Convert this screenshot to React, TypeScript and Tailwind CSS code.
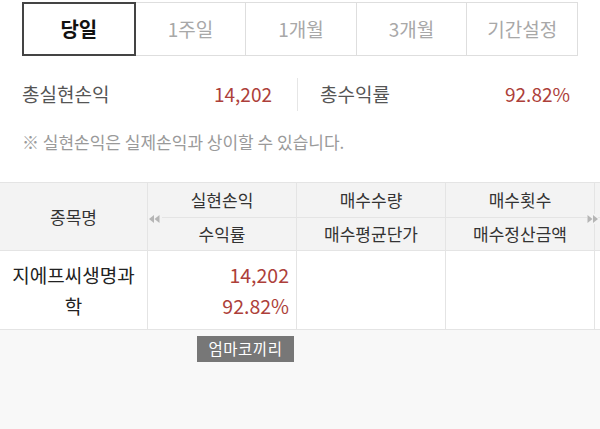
import React from "react";

const tabs = ["당일", "1주일", "1개월", "3개월", "기간설정"];

const DoubleArrow = ({ dir }: { dir: "left" | "right" }) => (
  <svg width="11" height="8" viewBox="0 0 11 8" className="block">
    {dir === "left" ? (
      <>
        <polygon points="5,0 5,8 0,4" fill="#b5b5b5" />
        <polygon points="10.5,0 10.5,8 5.5,4" fill="#b5b5b5" />
      </>
    ) : (
      <>
        <polygon points="0.5,0 0.5,8 5.5,4" fill="#b5b5b5" />
        <polygon points="6,0 6,8 11,4" fill="#b5b5b5" />
      </>
    )}
  </svg>
);

const HeadCell = ({ children }: { children?: React.ReactNode }) => (
  <div className="flex w-[149px] shrink-0 items-center justify-center border-r border-[#e4e4e4] text-[17px] text-[#333]">
    {children}
  </div>
);

const App = () => {
  const [active, setActive] = React.useState(0);

  return (
    <div
      className="flex h-[429px] w-[600px] flex-col overflow-hidden bg-white"
      style={{ fontFamily: '"Noto Sans CJK KR", "Noto Sans", sans-serif' }}
    >
      {/* period tabs */}
      <div className="flex px-[22px] pt-[2px]">
        {tabs.map((t, i) => (
          <button
            key={t}
            onClick={() => setActive(i)}
            className={
              i === active
                ? "flex h-[54px] flex-1 items-center justify-center border-2 border-[#444] text-[20px] font-bold text-[#111]"
                : "flex h-[54px] flex-1 items-center justify-center border-y border-r border-[#dedede] text-[19px] text-[#a8a8a8]"
            }
          >
            {t}
          </button>
        ))}
      </div>

      {/* summary */}
      <div className="mt-[22px] flex h-[33px] items-center px-[22px] text-[19px]">
        <div className="flex flex-1 items-center justify-between pr-[25px]">
          <span className="text-[#555]">총실현손익</span>
          <span className="text-[#ad3f3a]">14,202</span>
        </div>
        <div className="flex h-full flex-1 items-center justify-between border-l border-[#e6e6e6] pl-[22px] pr-[8px]">
          <span className="text-[#555]">총수익률</span>
          <span className="text-[#ad3f3a]">92.82%</span>
        </div>
      </div>

      <p className="mt-[21px] px-[22px] text-[17px] leading-[20px] text-[#9a9a9a]">
        ※ 실현손익은 실제손익과 상이할 수 있습니다.
      </p>

      {/* table */}
      <div className="mt-[30px] flex flex-1 flex-col bg-[#f8f8f8]">
        <div className="flex h-[69px] border-y border-[#e4e4e4] bg-[#f3f3f3]">
          <div className="flex w-[148px] shrink-0 items-center justify-center border-r border-[#e4e4e4] text-[17px] text-[#333]">
            종목명
          </div>
          <div className="relative flex flex-1 flex-col">
            <div className="flex h-[35px] border-b border-[#e4e4e4]">
              <HeadCell>실현손익</HeadCell>
              <HeadCell>매수수량</HeadCell>
              <HeadCell>매수횟수</HeadCell>
            </div>
            <div className="flex flex-1">
              <HeadCell>수익률</HeadCell>
              <HeadCell>매수평균단가</HeadCell>
              <HeadCell>매수정산금액</HeadCell>
            </div>
            <div className="absolute left-0 top-[31px] bg-[#f3f3f3] py-[1px] pl-[1px] pr-[2px]">
              <DoubleArrow dir="left" />
            </div>
            <div className="absolute right-[2px] top-[31px] bg-[#f3f3f3] py-[1px]">
              <DoubleArrow dir="right" />
            </div>
          </div>
        </div>

        <div className="flex h-[79px] border-b border-[#e4e4e4] bg-white">
          <div className="flex w-[148px] shrink-0 items-center justify-center border-r border-[#e4e4e4] px-[6px] text-center text-[19px] leading-[31px] text-[#222]">
            지에프씨생명과 학
          </div>
          <div className="flex w-[149px] shrink-0 flex-col items-end justify-center border-r border-[#e4e4e4] pr-[7px] text-[19.5px] leading-[31px] text-[#ad3f3a]">
            <span>14,202</span>
            <span>92.82%</span>
          </div>
          <div className="w-[149px] shrink-0 border-r border-[#e4e4e4]" />
          <div className="w-[149px] shrink-0 border-r border-[#e4e4e4]" />
        </div>

        <div className="ml-[197px] mt-[6px] flex h-[26px] w-[97px] items-center justify-center bg-[#777] text-[15.5px] tracking-[0.5px] text-white">
          엄마코끼리
        </div>
      </div>
    </div>
  );
};

export default App;
